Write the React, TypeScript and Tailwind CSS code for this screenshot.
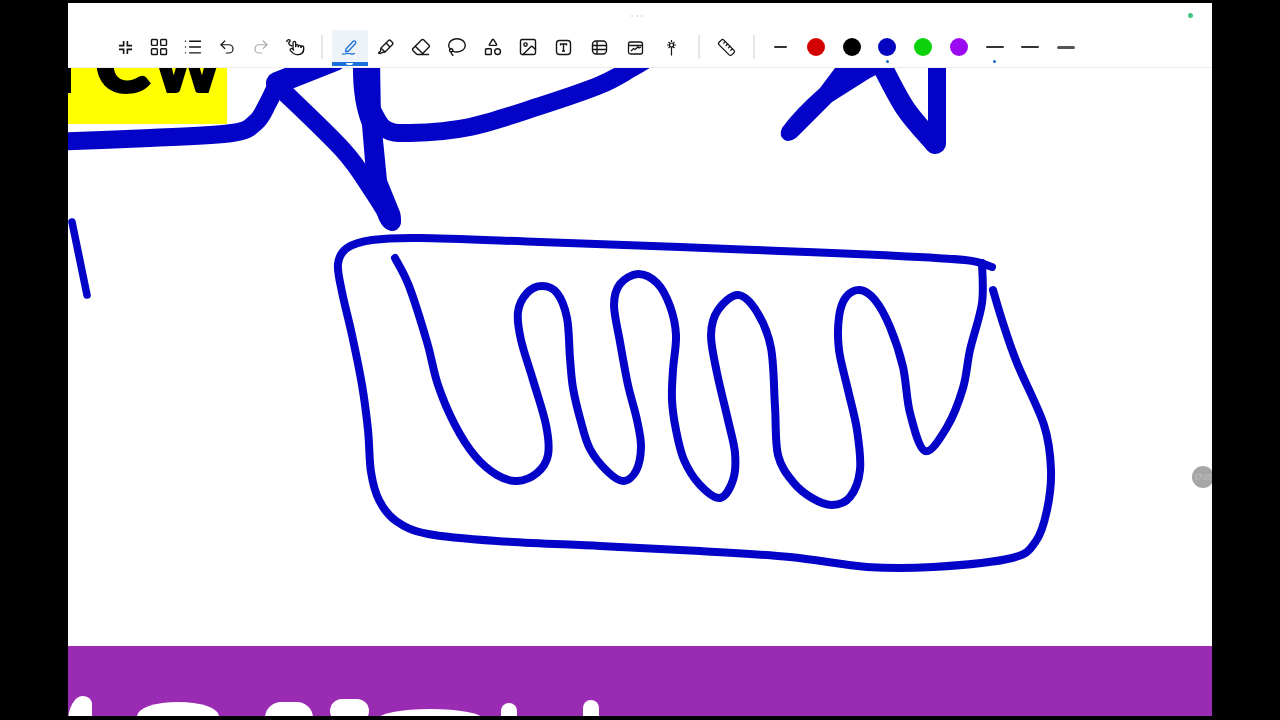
import {
  Eraser,
  Image,
  Lasso,
  LayoutGrid,
  List,
  Pointer,
  Redo2,
  Ruler,
  Shapes,
  Undo2,
} from 'lucide-react';
import type { ReactNode } from 'react';

type Pt = [number, number];

// catmull-rom through the traced points, gives the hand drawn look
function smooth(pts: Pt[]) {
  let d = `M${pts[0][0]} ${pts[0][1]}`;
  for (let i = 0; i < pts.length - 1; i++) {
    const p0 = pts[i - 1] ?? pts[i];
    const p1 = pts[i];
    const p2 = pts[i + 1];
    const p3 = pts[i + 2] ?? p2;
    const c1x = p1[0] + (p2[0] - p0[0]) / 6;
    const c1y = p1[1] + (p2[1] - p0[1]) / 6;
    const c2x = p2[0] - (p3[0] - p1[0]) / 6;
    const c2y = p2[1] - (p3[1] - p1[1]) / 6;
    d += ` C${c1x} ${c1y} ${c2x} ${c2y} ${p2[0]} ${p2[1]}`;
  }
  return d;
}

const box: Pt[] = [
  [992, 267], [965, 260], [880, 255], [780, 251], [680, 247], [540, 242], [420, 238], [372, 240],
  [347, 248], [338, 264], [342, 292], [352, 335], [362, 385], [368, 430], [371, 472], [379, 500],
  [396, 521], [428, 534], [497, 541], [600, 546], [700, 551], [790, 557], [867, 567], [933, 567],
  [1012, 558], [1036, 541], [1047, 510], [1051, 470], [1044, 425], [1017, 363], [1002, 320], [993, 290],
];

const squiggle: Pt[] = [
  [395, 258], [409, 286], [427, 342], [438, 385], [455, 425], [475, 456], [497, 475], [517, 481],
  [537, 473], [548, 455], [546, 425], [533, 380], [521, 340], [518, 312], [527, 293], [542, 286],
  [557, 293], [567, 318], [570, 358], [573, 388], [581, 422], [590, 449], [607, 471], [623, 481],
  [636, 471], [641, 447], [637, 420], [628, 385], [620, 342], [614, 305], [620, 284], [638, 274],
  [657, 283], [670, 306], [676, 335], [673, 370], [672, 400], [676, 430], [684, 460], [700, 485],
  [720, 498], [733, 480], [735, 453], [728, 420], [717, 373], [711, 335], [718, 310], [738, 295],
  [757, 312], [771, 348], [775, 407], [778, 455], [793, 482], [812, 498], [832, 505], [850, 497],
  [860, 470], [857, 430], [848, 390], [839, 350], [839, 317], [846, 297], [860, 290], [875, 300],
  [890, 327], [903, 367], [910, 413], [925, 451], [947, 427], [963, 388], [970, 350], [982, 303],
  [982, 263],
];

function Drawing() {
  return (
    <svg
      className="absolute inset-0 h-full w-full"
      viewBox="68 68 1144 578"
      fill="none"
      stroke="#0404c8"
      strokeLinecap="round"
      strokeLinejoin="round"
    >
      <path strokeWidth="18" d={smooth([[50, 142], [150, 138], [232, 133], [256, 122], [268, 103], [277, 84]])} />
      <path strokeWidth="22" d="M277 83 L335 60" />
      <path strokeWidth="18" d={smooth([[280, 88], [343, 150], [372, 190], [392, 222]])} />
      <path
        fill="#0404c8"
        stroke="none"
        d="M353 60 L380 60 L381 120 L387 180 L400 212 Q404 228 392 230 Q382 231 377 214 L367 185 L362 125 Q352 100 353 60 Z"
      />
      <path strokeWidth="18" d={smooth([[372, 110], [385, 129], [410, 133], [470, 127], [540, 106], [600, 85], [632, 68], [662, 50]])} />
      <path
        fill="#0404c8"
        stroke="none"
        d="M782 128 Q795 110 820 88 L835 68 L890 68 L870 78 L832 102 L796 138 Q786 145 781 136 Q780 132 782 128 Z"
      />
      <path strokeWidth="20" d={smooth([[879, 60], [905, 108], [935, 144]])} />
      <path strokeWidth="18" d="M937 58 L937 144" />
      <path strokeWidth="7.5" d="M72 222 L87 295" />
      <path strokeWidth="8" d={smooth(box)} />
      <path strokeWidth="8" d={smooth(squiggle)} />
    </svg>
  );
}

function Cell({ children, className = 'w-[35.7px]' }: { children: ReactNode; className?: string }) {
  return (
    <div className={`relative flex h-9 shrink-0 items-center justify-center pb-[2px] ${className}`}>
      {children}
    </div>
  );
}

function Sep({ className = '' }: { className?: string }) {
  return (
    <div className={`flex h-9 shrink-0 items-center justify-center pb-[2px] ${className}`}>
      <div className="h-6 w-[2px] bg-[#e6e6e6]" />
    </div>
  );
}

function Color({ className, picked }: { className: string; picked?: boolean }) {
  return (
    <Cell>
      <div className={`h-[18px] w-[18px] rounded-full ${className}`} />
      {picked && <div className="absolute bottom-[3px] h-[3px] w-[3px] rounded-full bg-[#1565c0]" />}
    </Cell>
  );
}

function Weight({ className, picked }: { className: string; picked?: boolean }) {
  return (
    <Cell>
      <div className={`rounded-full ${className}`} />
      {picked && <div className="absolute bottom-[3px] h-[3px] w-[3px] rounded-full bg-[#1565c0]" />}
    </Cell>
  );
}

function Toolbar() {
  const ic = { size: 20, strokeWidth: 1.7 };
  return (
    <div className="flex h-[65px] shrink-0 border-b border-[#ececec] bg-white pl-[40px] pt-[27px] text-[#151515]">
      <Cell className="w-[34px]">
        <svg width="15" height="15" viewBox="0 0 16 16" fill="none" stroke="currentColor" strokeWidth="1.7">
          <path d="M6 1v5H1M10 1v5h5M6 15v-5H1M10 15v-5h5" />
        </svg>
      </Cell>
      <Cell className="w-[34px]"><LayoutGrid {...ic} /></Cell>
      <Cell className="w-[34px]"><List {...ic} /></Cell>
      <Cell className="w-[34px]"><Undo2 size={18} strokeWidth={1.6} /></Cell>
      <Cell className="w-[34px] text-[#aaa]"><Redo2 size={18} strokeWidth={1.6} /></Cell>
      <Cell className="w-[34px]">
        <svg width="20" height="20" viewBox="0 0 20 20" fill="none" stroke="currentColor" strokeWidth="1.4">
          <path d="M1.500 5c1-3 4-3 3.500-1s-2 1-1 3 2 1 3 2" />
          <Pointer x="4" y="3" width="16" height="16" strokeWidth="2" />
        </svg>
      </Cell>
      <Sep className="w-5" />
      <Cell className="w-[35.7px] bg-[#eef3fa] text-[#1a6fd8]">
        <svg width="18" height="18" viewBox="0 0 18 18" fill="none" stroke="currentColor" strokeWidth="1.3" strokeLinecap="round" strokeLinejoin="round">
          <path d="M5 11 12 3.500a1.500 1.500 0 0 1 2.500 2L7.500 13l-3 .8z" />
          <path d="M1.500 16c3 1 4-1.500 7-.5s4 .5 5 0" />
        </svg>
        <div className="absolute inset-x-0 bottom-0 flex h-1 items-center justify-center bg-[#1a6fd8]">
          <div className="h-[2px] w-[7px] rounded-b-full bg-white" />
        </div>
      </Cell>
      <Cell>
        <svg width="18" height="18" viewBox="0 0 18 18" fill="none" stroke="currentColor" strokeWidth="1.4" strokeLinejoin="round">
          <path d="M11.500 2.500a1.500 1.500 0 0 1 2 0l2 2a1.500 1.500 0 0 1 0 2L8 14l-4-4z" />
          <path d="M9 5l4 4M4 10l-.5 3-2 2 2 .5 1.500-1L8 14" />
        </svg>
      </Cell>
      <Cell><Eraser {...ic} /></Cell>
      <Cell><Lasso {...ic} /></Cell>
      <Cell><Shapes {...ic} /></Cell>
      <Cell><Image {...ic} /></Cell>
      <Cell>
        <svg width="17" height="17" viewBox="0 0 17 17" fill="none" stroke="currentColor" strokeWidth="1.4">
          <rect x="1.500" y="1.500" width="14" height="14" rx="3" />
          <path d="M5.500 6.500V5h6v1.500M8.500 5v7M7 12h3" />
        </svg>
      </Cell>
      <Cell>
        <svg width="17" height="17" viewBox="0 0 17 17" fill="none" stroke="currentColor" strokeWidth="1.4">
          <rect x="1.500" y="2" width="14" height="13" rx="3.500" />
          <path d="M1.500 6.500h14M1.500 10.500h14M6 2v13" />
        </svg>
      </Cell>
      <Cell>
        <svg width="17" height="17" viewBox="0 0 17 17" fill="none" stroke="currentColor" strokeWidth="1.3">
          <rect x="1.500" y="3" width="14" height="12" rx="2" />
          <path d="M2 6.500h13M4 12l2.500-2.500 1.500 1 3-2.500 1 1L14 8" />
        </svg>
      </Cell>
      <Cell>
        <svg width="17" height="17" viewBox="0 0 17 17" fill="none" stroke="currentColor" strokeWidth="1.2">
          <circle cx="8.500" cy="6" r="2" />
          <path d="M8.500 8v8.500M8.500 1v2M4 6h2M11 6h2M5.500 3l1.500 1.500M11.500 3 10 4.500M5.500 9 7 7.500M11.500 9 10 7.500" />
        </svg>
      </Cell>
      <Sep className="w-5" />
      <Cell><Ruler size={19} strokeWidth={1.6} /></Cell>
      <Sep className="w-[18px]" />
      <Weight className="h-[2px] w-[13px] bg-[#333]" />
      <Color className="bg-[#d40000]" />
      <Color className="bg-black" />
      <Color className="bg-[#0505c0]" picked />
      <Color className="bg-[#0cd20c]" />
      <Color className="bg-[#9a0af0]" />
      <Weight className="h-[2px] w-[18px] bg-[#333]" picked />
      <Weight className="h-[2px] w-[18px] bg-[#333]" />
      <Weight className="h-[3px] w-[18px] bg-[#555]" />
    </div>
  );
}

export default function App() {
  return (
    <div className="flex h-[720px] flex-col overflow-hidden bg-black px-[68px] pb-1 pt-[3px] font-['Lato',sans-serif]">
      <div className="relative">
        <Toolbar />
        <div className="absolute left-[563px] top-[12px] flex gap-[3px]">
          <span className="h-[2px] w-[2px] rounded-full bg-[#ddd]" />
          <span className="h-[2px] w-[2px] rounded-full bg-[#ddd]" />
          <span className="h-[2px] w-[2px] rounded-full bg-[#ddd]" />
        </div>
        <div className="absolute left-[1120px] top-[10px] h-[5px] w-[5px] rounded-full bg-[#3ec77f]" />
      </div>

      <div className="relative flex-1 overflow-hidden bg-white">
        <div className="absolute left-0 top-0 flex h-[56px] w-[159px] justify-end overflow-hidden bg-[#ffff00] pr-[5px]">
          <span className="-mt-[74px] whitespace-nowrap text-[110px] font-black leading-[110px] text-black [-webkit-text-stroke:2px_#000]">
            <span className="mr-[16px]">N</span>
            e
            <span className="text-[85px]">w</span>
          </span>
        </div>
        <Drawing />
        <div className="absolute right-[-2px] top-[398px] flex h-[22px] w-[22px] items-center justify-center rounded-full bg-[#a6a6a6] text-[7px] text-[#c4c4c4]">
          17:05
        </div>
      </div>

      <div className="flex h-[70px] shrink-0 items-start overflow-hidden bg-[#9a2bb3] pt-[50px]">
        <div className="h-[30px] w-[24px] rounded-[70%_45%_0_0/100%_30%_0_0] bg-white" />
        <div className="ml-[45px] mt-[6px] h-[14px] w-[82px] rounded-[50%_50%_0_0/100%_100%_0_0] bg-white" />
        <div className="ml-[46px] mt-[6px] h-[24px] w-[48px] rounded-t-[16px] bg-white" />
        <div className="ml-[17px] mt-[3px] h-[24px] w-[39px] rounded-[16px] bg-white" />
        <div className="ml-[9px] mt-[13px] h-[10px] w-[105px] rounded-[50%_50%_0_0/100%_100%_0_0] bg-white" />
        <div className="ml-[18px] mt-[7px] h-[24px] w-[16px] rounded-t-full bg-white" />
        <div className="ml-[66px] mt-[4px] h-[24px] w-[16px] rounded-t-full bg-white" />
      </div>
    </div>
  );
}
